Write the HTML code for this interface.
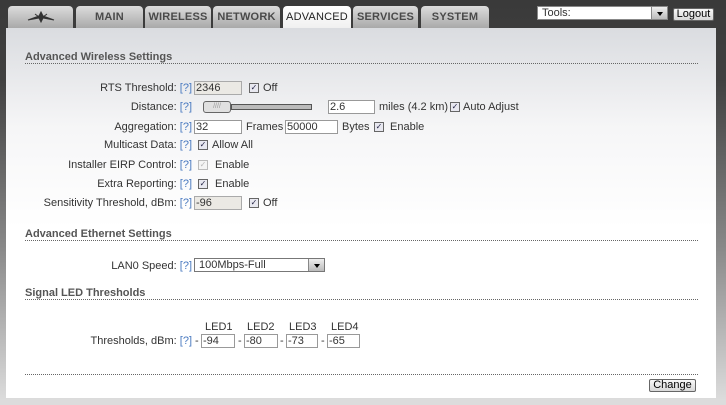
<!DOCTYPE html>
<html><head><style>
*{margin:0;padding:0;box-sizing:border-box}
body{width:726px;height:405px;overflow:hidden;background:linear-gradient(#3a3a3a 0,#404040 80px,#8a8a8a 250px,#dcdcdc 400px);font-family:"Liberation Sans",sans-serif;font-size:11px;color:#333;position:relative}
.a{position:absolute;white-space:nowrap}
.tab{position:absolute;top:6px;height:22px;background:linear-gradient(#dcdcdc,#a9a9a9);border-radius:4px 4px 0 0;font-weight:bold;font-size:11px;color:#4a4a4a;text-align:center;line-height:22px;letter-spacing:0.2px}
.tab.act{background:linear-gradient(#fff,#f0f0f0);font-weight:normal;color:#222}
.panel{position:absolute;left:6px;top:28px;width:710px;height:370px;background:linear-gradient(#dadce0,#f6f6f7 100px,#fff 200px,#fff)}
.h{position:absolute;left:25px;font-weight:bold;color:#555;font-size:11px}
.line{position:absolute;left:25px;width:673px;border-top:1px dotted #666}
.lbl{position:absolute;right:534px;text-align:right;white-space:nowrap}
.q{color:#4a7ac0}
.in{position:absolute;height:14px;border:1px solid #999;background:#fff;font-size:11px;line-height:12px;padding-left:1px}
.dis{background:#ebe9e4;border-color:#aaa}
.cb{position:absolute;width:10px;height:10px;border:1px solid #666;background:#e8e8f0;font-size:8px;line-height:8px;text-align:center;color:#224}
.sel{position:absolute;height:14px;border:1px solid #777;background:#fff;line-height:12px;padding-left:4px}
.arr{position:absolute;right:0;top:0;width:16px;height:12px;background:linear-gradient(#eee,#bbb);border-left:1px solid #888}
.arr:after{content:"";position:absolute;left:5px;top:5px;border:3px solid transparent;border-top:4px solid #000}
.btn{position:absolute;border:1px solid #666;border-radius:2px;background:linear-gradient(#f8f8f8,#d8d8d8);text-align:center;line-height:11px;font-size:11px;color:#000}
</style></head><body>
<div class="tab" style="left:8px;width:65px"><svg width="30" height="14" style="margin-top:4px" viewBox="0 0 30 14"><path d="M2 10 L13 6 L15 2 L17 6 L28 10 L17 8 L15 12 L13 8Z M9 4 L13 7 M21 4 L17 7" stroke="#333" stroke-width="1" fill="#333"/></svg></div>
<div class="tab" style="left:76px;width:67px">MAIN</div>
<div class="tab" style="left:145px;width:66px">WIRELESS</div>
<div class="tab" style="left:213px;width:67px">NETWORK</div>
<div class="tab act" style="left:283px;width:68px">ADVANCED</div>
<div class="tab" style="left:353px;width:65px">SERVICES</div>
<div class="tab" style="left:421px;width:68px">SYSTEM</div>
<div class="sel" style="left:537px;top:6px;width:131px;border-color:#888">Tools:<div class="arr"></div></div>
<div class="btn" style="left:673px;top:8px;width:41px;height:13px">Logout</div>
<div class="panel"></div>

<div class="h" style="top:51px">Advanced Wireless Settings</div>
<div class="line" style="top:63px"></div>

<div class="lbl" style="top:82px">RTS Threshold: <span class="q">[?]</span></div>
<div class="in dis" style="left:194px;top:81px;width:48px">2346</div>
<div class="cb" style="left:249px;top:83px">✓</div><div class="a" style="left:263px;top:82px">Off</div>

<div class="lbl" style="top:101px">Distance: <span class="q">[?]</span></div>
<div class="a" style="left:203px;top:101px;width:28px;height:12px;border:1px solid #666;border-radius:3px;background:#e0e0e0;font-size:7px;color:#999;text-align:center;line-height:10px">////</div>
<div class="a" style="left:231px;top:104px;width:81px;height:6px;border:1px solid #555;background:#bbb"></div>
<div class="in" style="left:328px;top:100px;width:47px">2.6</div>
<div class="a" style="left:379px;top:101px">miles (4.2 km)</div>
<div class="cb" style="left:450px;top:102px">✓</div><div class="a" style="left:463px;top:101px">Auto Adjust</div>

<div class="lbl" style="top:121px">Aggregation: <span class="q">[?]</span></div>
<div class="in" style="left:194px;top:120px;width:48px">32</div>
<div class="a" style="left:246px;top:121px">Frames</div>
<div class="in" style="left:285px;top:120px;width:53px">50000</div>
<div class="a" style="left:342px;top:121px">Bytes</div>
<div class="cb" style="left:374px;top:122px">✓</div><div class="a" style="left:390px;top:121px">Enable</div>

<div class="lbl" style="top:139px">Multicast Data: <span class="q">[?]</span></div>
<div class="cb" style="left:198px;top:140px">✓</div><div class="a" style="left:212px;top:139px">Allow All</div>

<div class="lbl" style="top:159px">Installer EIRP Control: <span class="q">[?]</span></div>
<div class="cb" style="left:198px;top:160px;border-color:#bbb;color:#bbb;background:#f4f4f4">✓</div><div class="a" style="left:215px;top:159px">Enable</div>

<div class="lbl" style="top:178px">Extra Reporting: <span class="q">[?]</span></div>
<div class="cb" style="left:198px;top:179px">✓</div><div class="a" style="left:215px;top:178px">Enable</div>

<div class="lbl" style="top:197px">Sensitivity Threshold, dBm: <span class="q">[?]</span></div>
<div class="in dis" style="left:194px;top:196px;width:48px">-96</div>
<div class="cb" style="left:249px;top:198px">✓</div><div class="a" style="left:263px;top:197px">Off</div>

<div class="h" style="top:228px">Advanced Ethernet Settings</div>
<div class="line" style="top:240px"></div>

<div class="lbl" style="top:260px">LAN0 Speed: <span class="q">[?]</span></div>
<div class="sel" style="left:194px;top:258px;width:131px">100Mbps-Full<div class="arr"></div></div>

<div class="h" style="top:287px">Signal LED Thresholds</div>
<div class="line" style="top:299px"></div>

<div class="a" style="left:205px;top:321px">LED1</div>
<div class="a" style="left:247px;top:321px">LED2</div>
<div class="a" style="left:289px;top:321px">LED3</div>
<div class="a" style="left:331px;top:321px">LED4</div>
<div class="lbl" style="top:335px">Thresholds, dBm: <span class="q">[?]</span></div>
<div class="a" style="left:195px;top:335px">-</div><div class="in" style="left:201px;top:334px;width:34px">-94</div>
<div class="a" style="left:238px;top:335px">-</div><div class="in" style="left:244px;top:334px;width:34px">-80</div>
<div class="a" style="left:280px;top:335px">-</div><div class="in" style="left:286px;top:334px;width:32px">-73</div>
<div class="a" style="left:321px;top:335px">-</div><div class="in" style="left:327px;top:334px;width:33px">-65</div>

<div class="line" style="top:374px"></div>
<div class="btn" style="left:649px;top:379px;width:47px;height:13px">Change</div>
</body></html>
